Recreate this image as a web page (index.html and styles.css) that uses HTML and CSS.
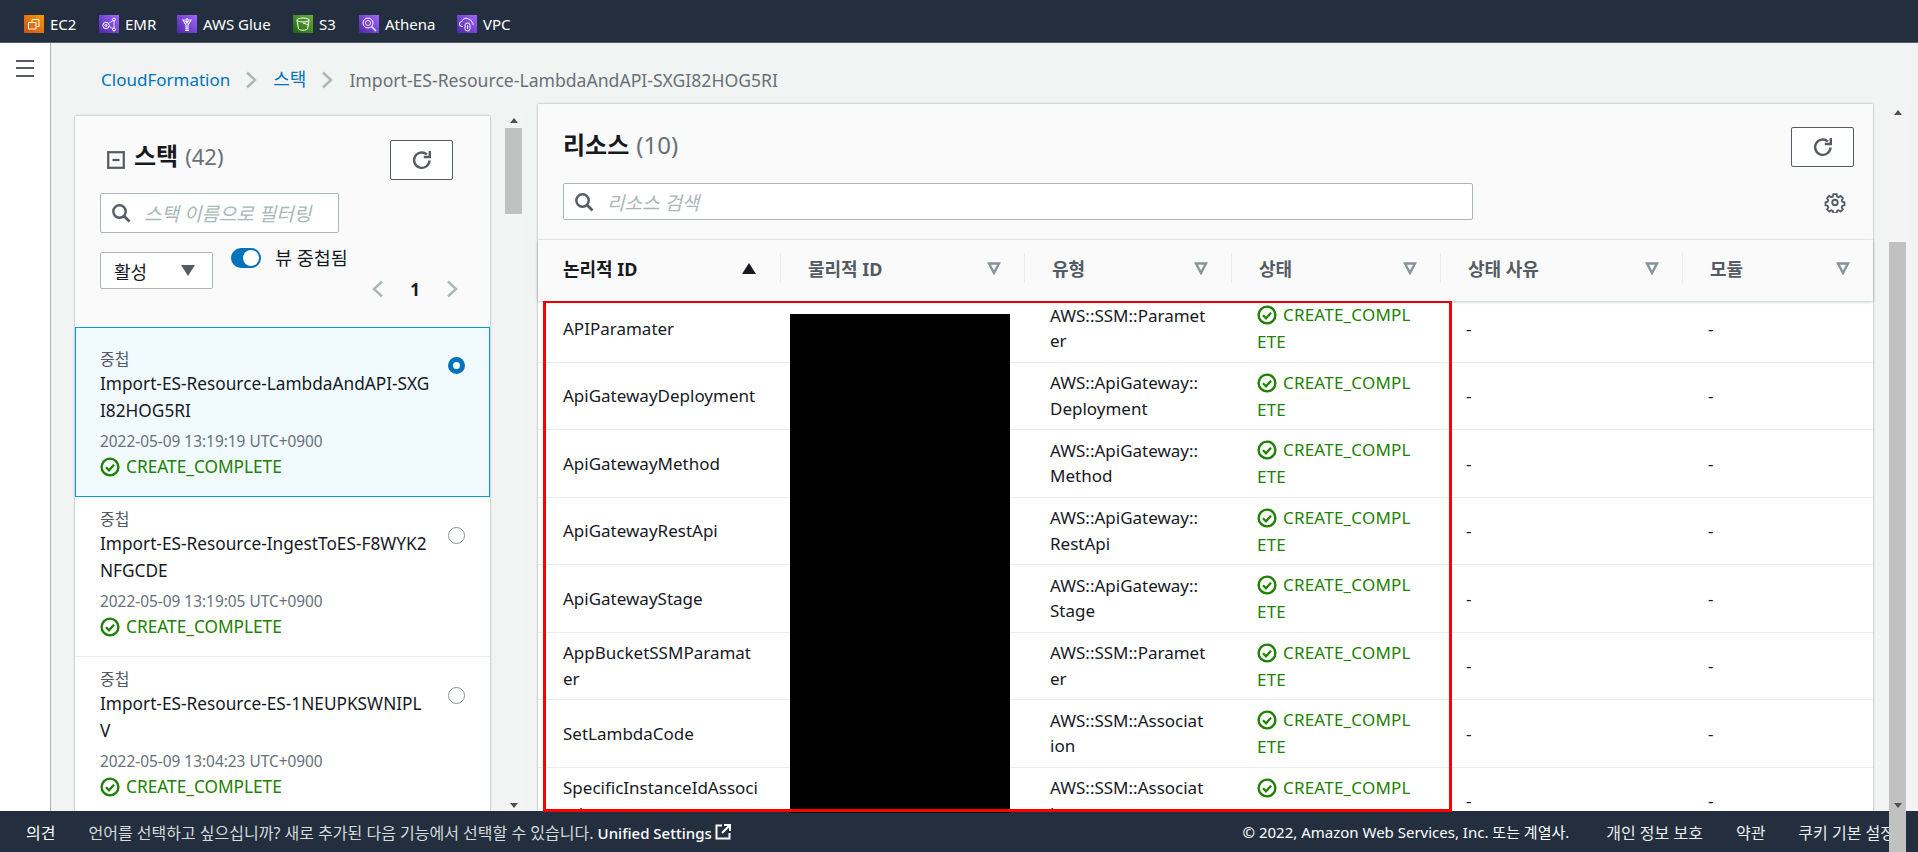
FILE: index.html
```html
<!DOCTYPE html>
<html lang="ko">
<head>
<meta charset="utf-8">
<title>CloudFormation</title>
<link rel="stylesheet" href="styles.css">
</head>
<body>
<svg class="defs" width="0" height="0" aria-hidden="true">
  <defs>
    <linearGradient id="gOrange" x1="0" y1="1" x2="1" y2="0"><stop offset="0" stop-color="#c8511b"/><stop offset="1" stop-color="#ff9900"/></linearGradient>
    <linearGradient id="gPurple" x1="0" y1="1" x2="1" y2="0"><stop offset="0" stop-color="#4d27a8"/><stop offset="1" stop-color="#a166ff"/></linearGradient>
    <linearGradient id="gGreen" x1="0" y1="1" x2="1" y2="0"><stop offset="0" stop-color="#1b660f"/><stop offset="1" stop-color="#6cae3e"/></linearGradient>
    <symbol id="ok" viewBox="0 0 20 20"><circle cx="10" cy="10" r="8.4" fill="none" stroke="#1d8102" stroke-width="2.4"/><path d="M6 10.3l3 3 5-5.6" fill="none" stroke="#1d8102" stroke-width="2.2"/></symbol>
    <symbol id="refresh" viewBox="0 0 24 24"><path d="M19.5 12.5a7.7 7.7 0 1 1-2.6-6.1" fill="none" stroke="#545b64" stroke-width="2.4"/><path d="M19.8 3v6h-6" fill="none" stroke="#545b64" stroke-width="2.4"/></symbol>
    <symbol id="search" viewBox="0 0 20 20"><circle cx="8.5" cy="8.5" r="6.2" fill="none" stroke="#545b64" stroke-width="2.4"/><path d="M13 13l5.5 5.5" stroke="#545b64" stroke-width="2.6"/></symbol>
    <symbol id="chev" viewBox="0 0 12 18"><path d="M2 1.500l8 7.500-8 7.500" fill="none" stroke="#aab7b8" stroke-width="2.400"/></symbol>
    <symbol id="sort" viewBox="0 0 14 14"><path d="M2 2.500h10L7 12z" fill="none" stroke="#879596" stroke-width="2.400"/></symbol>
  </defs>
</svg>

<header class="topbar">
  <a class="svc svc-ec2">
    <svg class="svc-icon" viewBox="0 0 20 18"><rect width="20" height="18" fill="url(#gOrange)"/><path d="M8 7V4.500h7v7h-2.500M4.500 7.500h7.500v6.500H4.500z" fill="none" stroke="#fff" stroke-width="1"/></svg>
    <span>EC2</span>
  </a>
  <a class="svc svc-emr">
    <svg class="svc-icon" viewBox="0 0 20 18"><rect width="20" height="18" fill="url(#gPurple)"/><circle cx="7" cy="10.500" r="3.200" fill="none" stroke="#fff"/><circle cx="7" cy="10.500" r="1" fill="none" stroke="#fff"/><circle cx="15" cy="4.500" r="1.400" fill="none" stroke="#fff"/><circle cx="15" cy="14.500" r="1.400" fill="none" stroke="#fff"/><path d="M9.500 8.500l4.500-3M15 6v7M10 11.500l4 2" fill="none" stroke="#fff" stroke-width=".8"/></svg>
    <span>EMR</span>
  </a>
  <a class="svc svc-glue">
    <svg class="svc-icon" viewBox="0 0 20 18"><rect width="20" height="18" fill="url(#gPurple)"/><path d="M6 5h8l-3 5v4H9v-4z M10 3v2M8 15.500h4" fill="none" stroke="#fff" stroke-width="1.100"/><path d="M8 6h4l-2 3z" fill="#fff"/></svg>
    <span>AWS Glue</span>
  </a>
  <a class="svc svc-s3">
    <svg class="svc-icon" viewBox="0 0 20 18"><rect width="20" height="18" fill="url(#gGreen)"/><ellipse cx="10" cy="5" rx="6" ry="2" fill="none" stroke="#fff"/><path d="M4 5l1.500 9c1 1.600 8 1.600 9 0L16 5M10 8l6 2" fill="none" stroke="#fff"/></svg>
    <span>S3</span>
  </a>
  <a class="svc svc-athena">
    <svg class="svc-icon" viewBox="0 0 20 18"><rect width="20" height="18" fill="url(#gPurple)"/><circle cx="9" cy="8" r="5" fill="none" stroke="#fff"/><circle cx="9" cy="8" r="2.500" fill="none" stroke="#fff" stroke-width=".8"/><path d="M12.500 11.500l4.500 4.500" stroke="#fff" stroke-width="1.400"/></svg>
    <span>Athena</span>
  </a>
  <a class="svc svc-vpc">
    <svg class="svc-icon" viewBox="0 0 20 18"><rect width="20" height="18" fill="url(#gPurple)"/><path d="M6 11.500H5a2.500 2.500 0 0 1 0-5c.5-3 5-4.500 7-2 1.500 0 2.500 1 2.500 2.500 1.500.3 2 1.500 1.500 3" fill="none" stroke="#fff"/><rect x="8" y="8" width="5" height="8" rx="2.500" fill="none" stroke="#fff"/><path d="M10.500 10v4" stroke="#fff"/></svg>
    <span>VPC</span>
  </a>
</header>

<div class="main">
  <aside class="sidenav">
    <span class="burger"><i></i><i></i><i></i></span>
  </aside>
  <div class="content">
    <nav class="crumbs">
      <a class="crumb-link">CloudFormation</a>
      <svg class="chev"><use href="#chev"/></svg>
      <a class="crumb-link crumb-ko">스택</a>
      <svg class="chev"><use href="#chev"/></svg>
      <span class="crumb-cur">Import-ES-Resource-LambdaAndAPI-SXGI82HOG5RI</span>
    </nav>
    <div class="split">
      <section class="stacks">
        <div class="stacks-head">
          <div class="stacks-title-row">
            <svg class="collapse" viewBox="0 0 18 18"><rect x="1.200" y="1.200" width="15.600" height="15.600" fill="none" stroke="#545b64" stroke-width="2.200"/><path d="M5.500 9h7" stroke="#545b64" stroke-width="2.200"/></svg>
            <h2 class="h-title">스택</h2><span class="h-count">(42)</span>
            <button class="ref-btn"><svg class="ref-ico"><use href="#refresh"/></svg></button>
          </div>
          <div class="filter">
            <svg class="s-ico"><use href="#search"/></svg>
            <span class="ph">스택 이름으로 필터링</span>
          </div>
          <div class="controls">
            <div class="select"><span>활성</span><i class="caret"></i></div>
            <div class="toggle-wrap">
              <div class="toggle-line"><span class="toggle"><i></i></span><span class="toggle-label">뷰 중첩됨</span></div>
              <div class="pager">
                <svg class="pg-ico flip"><use href="#chev"/></svg>
                <b>1</b>
                <svg class="pg-ico"><use href="#chev"/></svg>
              </div>
            </div>
          </div>
        </div>
        <ul class="stack-list">
          <li class="stack selected">
            <div class="stack-body">
              <div class="tag">중첩</div>
              <div class="name">Import-ES-Resource-LambdaAndAPI-SXG<br>I82HOG5RI</div>
              <div class="date">2022-05-09 13:19:19 UTC+0900</div>
              <div class="status"><svg class="ok"><use href="#ok"/></svg>CREATE_COMPLETE</div>
            </div>
            <span class="radio on"></span>
          </li>
          <li class="stack">
            <div class="stack-body">
              <div class="tag">중첩</div>
              <div class="name">Import-ES-Resource-IngestToES-F8WYK2<br>NFGCDE</div>
              <div class="date">2022-05-09 13:19:05 UTC+0900</div>
              <div class="status"><svg class="ok"><use href="#ok"/></svg>CREATE_COMPLETE</div>
            </div>
            <span class="radio"></span>
          </li>
          <li class="stack">
            <div class="stack-body">
              <div class="tag">중첩</div>
              <div class="name">Import-ES-Resource-ES-1NEUPKSWNIPL<br>V</div>
              <div class="date">2022-05-09 13:04:23 UTC+0900</div>
              <div class="status"><svg class="ok"><use href="#ok"/></svg>CREATE_COMPLETE</div>
            </div>
            <span class="radio"></span>
          </li>
        </ul>
      </section>
      <div class="vbar vbar-left"><i class="up"></i><i class="thumb"></i><i class="down"></i></div>

      <section class="res">
        <div class="res-head">
          <div class="res-title-row">
            <h2 class="h-title">리소스</h2><span class="h-count">(10)</span>
            <button class="ref-btn"><svg class="ref-ico"><use href="#refresh"/></svg></button>
          </div>
          <div class="res-search-row">
            <div class="filter wide">
              <svg class="s-ico"><use href="#search"/></svg>
              <span class="ph">리소스 검색</span>
            </div>
            <svg class="gear" viewBox="0 0 24 24"><path d="M10 2.500h4l.6 2.800 1.900.8 2.400-1.500 2.700 2.800-1.500 2.400.8 1.900 2.600.6v3.700l-2.600.6-.8 1.900 1.500 2.400-2.700 2.700-2.400-1.500-1.900.8-.6 2.600h-4l-.6-2.600-1.900-.8-2.400 1.500-2.700-2.700 1.500-2.400-.8-1.900-2.600-.6v-3.700l2.600-.6.8-1.900-1.500-2.400 2.700-2.800 2.400 1.500 1.900-.8z" transform="translate(1.200 1.200) scale(.9)" fill="none" stroke="#545b64" stroke-width="2.200"/><circle cx="12" cy="12.500" r="3" fill="none" stroke="#545b64" stroke-width="2"/></svg>
          </div>
        </div>
        <div class="thead">
          <div class="th th-active"><span>논리적 ID</span><i class="sort-on"></i></div>
          <div class="th"><span>물리적 ID</span><svg class="sort"><use href="#sort"/></svg></div>
          <div class="th"><span>유형</span><svg class="sort"><use href="#sort"/></svg></div>
          <div class="th"><span>상태</span><svg class="sort"><use href="#sort"/></svg></div>
          <div class="th"><span>상태 사유</span><svg class="sort"><use href="#sort"/></svg></div>
          <div class="th"><span>모듈</span><svg class="sort"><use href="#sort"/></svg></div>
        </div>
        <div class="tbody">
          <div class="rows">
            <div class="row"><div class="td">APIParamater</div><div class="td"></div><div class="td">AWS::SSM::Paramet<br>er</div><div class="td st"><div><svg class="ok"><use href="#ok"/></svg>CREATE_COMPL<br>ETE</div></div><div class="td">-</div><div class="td">-</div></div>
            <div class="row"><div class="td">ApiGatewayDeployment</div><div class="td"></div><div class="td">AWS::ApiGateway::<br>Deployment</div><div class="td st"><div><svg class="ok"><use href="#ok"/></svg>CREATE_COMPL<br>ETE</div></div><div class="td">-</div><div class="td">-</div></div>
            <div class="row"><div class="td">ApiGatewayMethod</div><div class="td"></div><div class="td">AWS::ApiGateway::<br>Method</div><div class="td st"><div><svg class="ok"><use href="#ok"/></svg>CREATE_COMPL<br>ETE</div></div><div class="td">-</div><div class="td">-</div></div>
            <div class="row"><div class="td">ApiGatewayRestApi</div><div class="td"></div><div class="td">AWS::ApiGateway::<br>RestApi</div><div class="td st"><div><svg class="ok"><use href="#ok"/></svg>CREATE_COMPL<br>ETE</div></div><div class="td">-</div><div class="td">-</div></div>
            <div class="row"><div class="td">ApiGatewayStage</div><div class="td"></div><div class="td">AWS::ApiGateway::<br>Stage</div><div class="td st"><div><svg class="ok"><use href="#ok"/></svg>CREATE_COMPL<br>ETE</div></div><div class="td">-</div><div class="td">-</div></div>
            <div class="row"><div class="td">AppBucketSSMParamat<br>er</div><div class="td"></div><div class="td">AWS::SSM::Paramet<br>er</div><div class="td st"><div><svg class="ok"><use href="#ok"/></svg>CREATE_COMPL<br>ETE</div></div><div class="td">-</div><div class="td">-</div></div>
            <div class="row"><div class="td">SetLambdaCode</div><div class="td"></div><div class="td">AWS::SSM::Associat<br>ion</div><div class="td st"><div><svg class="ok"><use href="#ok"/></svg>CREATE_COMPL<br>ETE</div></div><div class="td">-</div><div class="td">-</div></div>
            <div class="row"><div class="td">SpecificInstanceIdAssoci<br>ation</div><div class="td"></div><div class="td">AWS::SSM::Associat<br>ion</div><div class="td st"><div><svg class="ok"><use href="#ok"/></svg>CREATE_COMPL<br>ETE</div></div><div class="td">-</div><div class="td">-</div></div>
          </div>
        </div>
      </section>
      <div class="vbar vbar-right"><i class="up"></i><i class="thumb"></i><i class="down"></i></div>
    </div>
  </div>
</div>

<footer class="footer">
  <span class="fb">의견</span>
  <span class="notice">언어를 선택하고 싶으십니까? 새로 추가된 다음 기능에서 선택할 수 있습니다. <b>Unified Settings</b></span>
  <svg class="ext" viewBox="0 0 16 16"><path d="M7 1.500H1.500v13h13V9" fill="none" stroke="#fff" stroke-width="2"/><path d="M9 1h6v6M14.500 1.500L7 9" fill="none" stroke="#fff" stroke-width="2"/></svg>
  <span class="copy">© 2022, Amazon Web Services, Inc. 또는 계열사.</span>
  <a class="flink">개인 정보 보호</a>
  <a class="flink">약관</a>
  <a class="flink">쿠키 기본 설정</a>
</footer>

<div class="redact"></div>
<div class="redbox"></div>
</body>
</html>
```

FILE: styles.css
```css
* { box-sizing: border-box; }
html, body { margin: 0; height: 852px; overflow: hidden; }
body {
  position: relative;
  display: flex;
  flex-direction: column;
  font-family: "Noto Sans", "Noto Sans CJK KR", sans-serif;
  font-size: 17px;
  color: #16191f;
  background: #f2f3f3;
}
.defs { position: absolute; }
h2, ul { margin: 0; padding: 0; }
ul { list-style: none; }
button { background: #fff; padding: 0; }

/* top bar */
.topbar {
  height: 43px;
  flex: none;
  display: flex;
  align-items: flex-start;
  padding: 15px 0 0 24px;
  background: #232f3e;
  border-bottom: 1px solid #545b64;
  color: #fff;
  font-size: 15px;
}
.svc { display: flex; align-items: center; gap: 6px; height: 18px; }
.svc-icon { width: 20px; height: 18px; flex: none; }
.svc-ec2 { width: 75px; }
.svc-emr { width: 78px; }
.svc-glue { width: 116px; }
.svc-s3 { width: 66px; }
.svc-athena { width: 98px; }

/* layout */
.main { flex: 1; min-height: 0; display: flex; }
.sidenav { width: 51px; flex: none; background: #fff; border-right: 1px solid #aab7b8; padding: 17px 0 0 16px; }
.burger { display: flex; flex-direction: column; gap: 5.300px; width: 18px; }
.burger i { display: block; height: 2px; background: #545b64; }
.content { flex: 1; min-width: 0; display: flex; flex-direction: column; }

/* breadcrumbs */
.crumbs { height: 61px; flex: none; display: flex; align-items: center; padding: 12px 0 0 50px; font-size: 17px; }
.crumb-link { color: #0073bb; }
.crumb-ko { font-size: 18px; position: relative; top: -2px; }
.crumb-cur { color: #687078; font-size: 17.600px; }
.chev { width: 12px; height: 18px; margin: 0 16px 0 15px; }

.split { flex: 1; min-height: 0; display: flex; padding-left: 24px; }

/* left panel */
.stacks {
  width: 415px;
  flex: none;
  margin-top: 12px;
  background: #fafafa;
  box-shadow: 0 0 2px rgba(0, 28, 36, .4);
  overflow: hidden;
}
.stacks-head { height: 211px; padding: 24px 0 0 25px; }
.stacks-title-row { display: flex; align-items: flex-start; height: 53px; }
.collapse { width: 18px; height: 18px; margin: 11px 9px 0 7px; flex: none; }
.h-title { font-size: 24px; font-weight: 700; line-height: 30px; margin-top: 1px; }
.h-count { font-size: 24px; line-height: 30px; margin: 1px 0 0 7px; color: #687078; }
.stacks .h-count { font-size: 22px; }
.ref-btn { width: 63px; height: 40px; border: 1px solid #545b64; border-radius: 2px; margin-left: auto; display: flex; align-items: center; justify-content: center; flex: none; }
.stacks .ref-btn { margin-right: 37px; }
.ref-ico { width: 24px; height: 24px; }
.filter { width: 239px; height: 40px; background: #fff; border: 1px solid #aab7b8; border-radius: 2px; display: flex; align-items: center; padding-left: 10px; font-style: italic; font-size: 19px; color: #aab7b8; }
.s-ico { width: 20px; height: 20px; flex: none; margin-right: 13px; }
.controls { display: flex; margin-top: 15px; }
.select { width: 113px; height: 37px; margin-top: 4px; background: #fff; border: 1px solid #aab7b8; border-radius: 2px; display: flex; align-items: center; justify-content: space-between; padding: 0 17px 0 13px; font-size: 18px; }
.caret { width: 0; height: 0; border: 7px solid transparent; border-top: 11px solid #545b64; border-bottom: 0; }
.toggle-wrap { margin-left: 18px; flex: 1; }
.toggle-line { display: flex; align-items: center; gap: 14px; height: 20px; }
.toggle { width: 30px; height: 20px; border-radius: 10px; background: #0073bb; display: flex; align-items: center; justify-content: flex-end; padding-right: 2px; flex: none; }
.toggle i { width: 16px; height: 16px; border-radius: 50%; background: #fff; display: block; }
.toggle-label { font-size: 18.500px; white-space: nowrap; position: relative; top: -1px; }
.pager { display: flex; align-items: center; margin: 11px 0 0 141px; width: 86px; height: 20px; font-size: 17px; }
.pg-ico { width: 12px; height: 18px; }
.flip { transform: scaleX(-1); }
.pager b { flex: 1; text-align: center; }

.stack-list { background: #fff; }
.stack { display: flex; padding: 11px 0 0 25px; height: 160px; border-bottom: 1px solid #eaeded; }
.stack.selected { height: 170px; padding: 20px 0 0 24px; background: #f1faff; border: 1px solid #00a1c9; }
.stack-body { width: 345px; flex: none; }
.tag { font-size: 16px; line-height: 22px; color: #545b64; }
.name { font-size: 17.250px; line-height: 27px; white-space: nowrap; }
.date { font-size: 15.400px; line-height: 24px; color: #687078; margin-top: 6px; }
.status { color: #1d8102; font-size: 17.250px; line-height: 26px; display: flex; align-items: center; }
.ok { width: 20px; height: 20px; flex: none; margin-right: 6px; }
.radio { width: 17px; height: 17px; border-radius: 50%; border: 1px solid #879596; background: #fff; margin-top: 19px; margin-left: 3px; }
.radio.on { border: 5px solid #0073bb; margin-top: 9px; }

/* scrollbars */
.vbar { width: 17px; flex: none; position: relative; margin-left: 15px; background: #f4f4f4; display: flex; flex-direction: column; align-items: center; }
.vbar .thumb { display: block; width: 100%; background: #c1c1c1; }
.vbar .up { width: 0; height: 0; border: 4px solid transparent; border-bottom: 5px solid #505050; border-top: 0; margin-top: 6px; }
.vbar .down { width: 0; height: 0; border: 4px solid transparent; border-top: 5px solid #505050; border-bottom: 0; margin-top: auto; margin-bottom: 3px; }
.vbar-left { margin-top: 8px; }
.vbar-left .thumb { height: 86px; margin-top: 5px; }
.vbar-right { margin-left: 16px; }
.vbar-right .thumb { margin-top: 127px; flex: 1; margin-bottom: -120px; }
.vbar-right .down { position: relative; z-index: 1; }

/* right panel */
.res {
  width: 1335px;
  flex: none;
  margin-left: 16px;
  background: #fff;
  box-shadow: 0 0 2px rgba(0, 28, 36, .4);
  display: flex;
  flex-direction: column;
  min-height: 0;
}
.res-head { height: 136px; background: #fafafa; padding: 23px 19px 0 25px; border-bottom: 1px solid #eaeded; flex: none; }
.res-title-row { display: flex; height: 56px; align-items: flex-start; }
.res-title-row .h-title, .res-title-row .h-count { margin-top: 3px; }
.res-search-row { display: flex; align-items: center; }
.filter.wide { width: 910px; height: 37px; }
.gear { width: 22px; height: 22px; margin-left: 351px; }

.thead, .row { display: grid; grid-template-columns: 243px 244px 207px 209px 242px 190px; }
.thead { height: 61px; padding-bottom: 5px; background: #fafafa; align-items: center; position: relative; z-index: 1; box-shadow: 0 1px 3px rgba(0, 28, 36, .25); flex: none; }
.th { display: flex; justify-content: space-between; align-items: center; height: 30px; padding: 0 23px 0 27px; color: #545b64; font-weight: 700; font-size: 18px; border-right: 1px solid #eaeded; white-space: nowrap; }
.th:first-child { padding-left: 25px; padding-right: 24px; color: #16191f; }
.th:last-child { border-right: 0; }
.sort-on { width: 0; height: 0; border: 7px solid transparent; border-bottom: 11px solid #16191f; border-top: 0; }
.sort { width: 14px; height: 14px; }
.tbody { flex: 1; min-height: 0; overflow: hidden; }
.rows { margin-top: -6px; }
.row { height: 67.5px; border-bottom: 1px solid #eaeded; }
.td { display: flex; align-items: center; padding: 0 0 0 25px; line-height: 25.500px; white-space: nowrap; }
.st { color: #1d8102; line-height: 27px; letter-spacing: .2px; }
.st .ok { vertical-align: -4px; }

/* footer */
.footer {
  height: 41px;
  flex: none;
  display: flex;
  align-items: center;
  padding: 0 23px 0 26px;
  background: #232f3e;
  color: #d5dbdb;
  font-size: 16px;
}
.fb { color: #fff; margin-right: 33px; }
.notice b { color: #fff; font-weight: 500; font-size: 15px; }
.ext { width: 16px; height: 16px; margin-left: 3px; }
.copy { margin-left: auto; margin-right: 37px; color: #fff; font-size: 15px; }
.flink { margin-left: 33px; color: #eaeded; }
.copy + .flink { margin-left: 0; }

/* annotations drawn over the screenshot */
.redact { position: absolute; left: 790px; top: 314px; width: 220px; height: 499px; background: #000; }
.redbox { position: absolute; left: 543px; top: 300px; width: 909px; height: 512px; border: 3px solid #f00; }
```
